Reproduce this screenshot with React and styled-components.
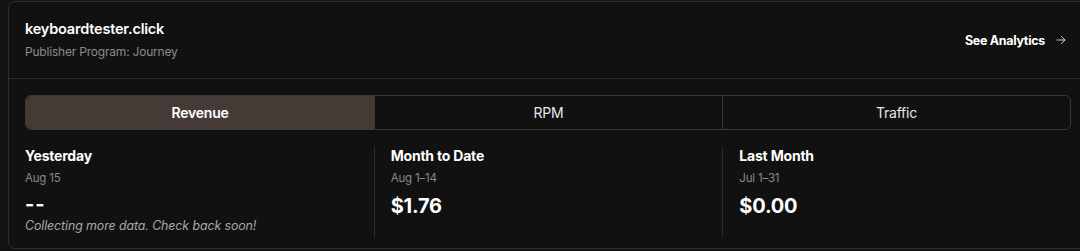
import React from "react";
import styled, { createGlobalStyle } from "styled-components";

const Global = createGlobalStyle`
  html, body { margin: 0; padding: 0; background: #131313; overflow: hidden; }
  body { font-family: Inter, "Noto Sans", sans-serif; color: #f2f2f2; }
  * { box-sizing: border-box; }
`;

const Page = styled.div`
  width: 1080px;
  height: 251px;
  padding: 1px 0 0 8px;
  overflow: hidden;
`;

const Card = styled.div`
  width: 1080px;
  background: #111111;
  border: 1px solid #2e2e2e;
  border-radius: 7px;
`;

const Header = styled.div`
  display: flex;
  align-items: center;
  justify-content: space-between;
  padding: 16px 20px 18px 16px;
  border-bottom: 1px solid #2a2a2a;
  height: 77px;
`;

const TitleBlock = styled.div`
  display: flex;
  flex-direction: column;
  gap: 5px;
`;

const Site = styled.div`
  font-size: 14.5px;
  font-weight: 600;
  line-height: 20px;
  color: #ffffff;
  letter-spacing: -0.2px;
`;

const Program = styled.div`
  font-size: 12px;
  line-height: 16px;
  color: #8c8c8c;
  letter-spacing: -0.2px;
`;

const Link = styled.a`
  display: flex;
  align-items: center;
  gap: 10px;
  font-size: 12.5px;
  font-weight: 700;
  color: #ffffff;
  text-decoration: none;
  letter-spacing: -0.3px;
  margin-top: 2px;
`;

const Body = styled.div`
  padding: 16px 16px 10px;
`;

const Tabs = styled.div`
  display: grid;
  grid-template-columns: repeat(3, 1fr);
  border: 1px solid #3a3a3a;
  border-radius: 6px;
  overflow: hidden;
  height: 35px;
`;

const Tab = styled.div`
  display: flex;
  align-items: center;
  justify-content: center;
  font-size: 14px;
  font-weight: ${(p) => (p.$active ? 600 : 400)};
  color: ${(p) => (p.$active ? "#ffffff" : "#e6e6e6")};
  background: ${(p) => (p.$active ? "#463a37" : "transparent")};
  border-left: ${(p) => (p.$first ? "none" : "1px solid #3a3a3a")};
  letter-spacing: -0.2px;
`;

const Stats = styled.div`
  display: grid;
  grid-template-columns: repeat(3, 1fr);
  margin-top: 16px;
`;

const Stat = styled.div`
  display: flex;
  flex-direction: column;
  height: 92px;
  padding-left: ${(p) => (p.$first ? "0" : "16px")};
  border-left: ${(p) => (p.$first ? "none" : "1px solid #2c2c2c")};
`;

const StatTitle = styled.div`
  font-size: 14px;
  font-weight: 700;
  line-height: 20px;
  color: #ffffff;
  letter-spacing: -0.2px;
`;

const StatDate = styled.div`
  margin-top: 4px;
  font-size: 11.5px;
  line-height: 16px;
  color: #8a8a8a;
  letter-spacing: -0.2px;
`;

const Value = styled.div`
  margin-top: 6px;
  font-size: 20px;
  font-weight: 700;
  line-height: ${(p) => (p.$empty ? "24px" : "28px")};
  color: #ffffff;
  letter-spacing: ${(p) => (p.$empty ? "1px" : "-0.2px")};
`;

const Note = styled.div`
  margin-top: 2px;
  font-size: 12.4px;
  font-style: italic;
  line-height: 16px;
  color: #a8a8a8;
  letter-spacing: -0.1px;
`;

const Arrow = () => (
  <svg width="12" height="12" viewBox="0 0 24 24" fill="none" stroke="#cfcfcf" strokeWidth="2" strokeLinecap="round" strokeLinejoin="round">
    <path d="M4 12h16" />
    <path d="M13 5l7 7-7 7" />
  </svg>
);

export default function App() {
  const stats = [
    { title: "Yesterday", date: "Aug 15", value: "--", note: "Collecting more data. Check back soon!" },
    { title: "Month to Date", date: "Aug 1–14", value: "$1.76" },
    { title: "Last Month", date: "Jul 1–31", value: "$0.00" },
  ];
  return (
    <Page>
      <Global />
      <Card>
        <Header>
          <TitleBlock>
            <Site>keyboardtester.click</Site>
            <Program>Publisher Program: Journey</Program>
          </TitleBlock>
          <Link href="#">
            See Analytics <Arrow />
          </Link>
        </Header>
        <Body>
          <Tabs>
            <Tab $active $first>Revenue</Tab>
            <Tab>RPM</Tab>
            <Tab>Traffic</Tab>
          </Tabs>
          <Stats>
            {stats.map((s, i) => (
              <Stat key={s.title} $first={i === 0}>
                <StatTitle>{s.title}</StatTitle>
                <StatDate>{s.date}</StatDate>
                <Value $empty={s.value === "--"}>{s.value}</Value>
                {s.note && <Note>{s.note}</Note>}
              </Stat>
            ))}
          </Stats>
        </Body>
      </Card>
    </Page>
  );
}
